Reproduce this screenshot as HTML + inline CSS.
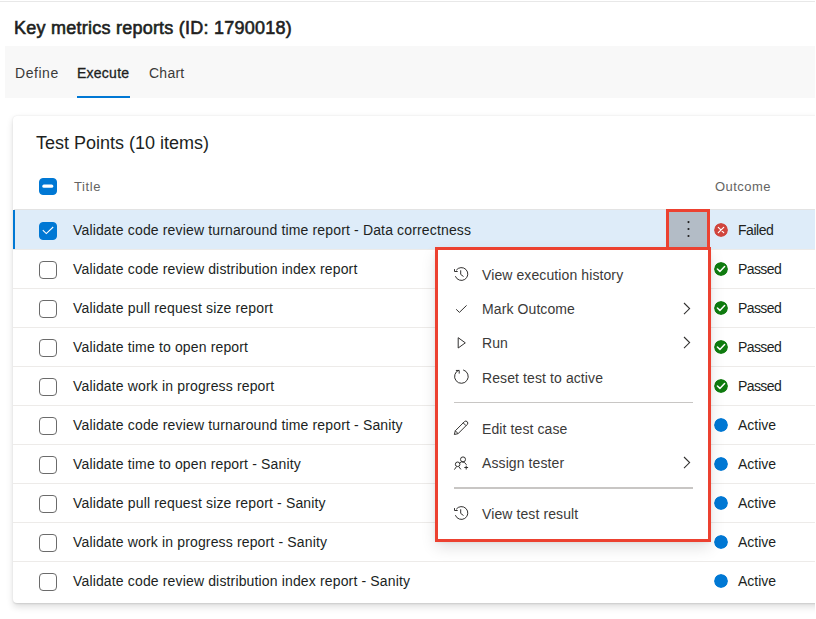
<!DOCTYPE html>
<html><head><meta charset="utf-8">
<style>
html,body{margin:0;padding:0;}
body{width:816px;height:619px;overflow:hidden;background:#fff;position:relative;font-family:"Liberation Sans",sans-serif;color:#323130;}
.abs{position:absolute;}
.topline{left:0;top:1px;width:816px;height:1px;background:#e8e8e8;}
.h1{left:14px;top:16px;font-size:18px;font-weight:400;letter-spacing:0.24px;-webkit-text-stroke:0.6px #201f1e;color:#201f1e;white-space:nowrap;line-height:24px;}
.band{left:5px;top:46px;width:810px;height:52px;background:#f8f8f8;}
.tab{top:63px;font-size:14px;line-height:20px;white-space:nowrap;color:#3b3a39;}
.ul{left:77px;top:96px;width:53px;height:2px;background:#0078d4;}
.card{left:13px;top:116px;width:830px;height:487px;background:#fff;border-radius:4px;box-shadow:0 3.2px 7.2px rgba(0,0,0,.13),0 0.6px 1.8px rgba(0,0,0,.11);overflow:hidden;}
.ctitle{left:23px;top:15px;font-size:18px;line-height:24px;white-space:nowrap;color:#201f1e;}
.hdr{top:63px;font-size:13px;font-weight:400;letter-spacing:.6px;color:#656463;line-height:16px;white-space:nowrap;}
.cb{width:16px;height:16px;border:1px solid #6b6b6b;border-radius:4px;left:26px;}
.cbf{background:#0078d4;border-color:#0078d4;border-radius:4px;}
.row{left:0;width:830px;height:38px;border-bottom:1px solid #edebe9;}
.sel{background:#deecf9;}
.rt{left:60px;top:10px;font-size:14px;line-height:18px;white-space:nowrap;letter-spacing:.15px;color:#201f1e;}
.oc{left:725px;top:10px;font-size:14px;line-height:18px;white-space:nowrap;color:#201f1e;}
.ic{left:701px;top:13px;width:14px;height:14px;border-radius:50%;}
.mi{left:482px;font-size:14px;line-height:18px;white-space:nowrap;color:#3b3a39;letter-spacing:.1px;}
</style></head><body>
<div class="abs topline"></div>
<div class="abs h1">Key metrics reports (ID: 1790018)</div>
<div class="abs band"></div>
<div class="abs tab" style="left:15px;letter-spacing:.55px">Define</div>
<div class="abs tab" style="left:77px;letter-spacing:.25px;-webkit-text-stroke:.3px #201f1e;color:#201f1e">Execute</div>
<div class="abs tab" style="left:149px;letter-spacing:.25px">Chart</div>
<div class="abs ul"></div>

<div class="abs card">
  <div class="abs ctitle">Test Points (10 items)</div>
  <div class="abs cb cbf" style="top:62px;height:15px;border-radius:4px"><svg class="abs" style="left:0;top:0" width="16" height="16"><rect x="2.3" y="5.4" width="11" height="3.4" rx="1.6" fill="#fff"/></svg></div>
  <div class="abs hdr" style="left:61px">Title</div>
  <div class="abs hdr" style="left:702px;letter-spacing:.45px">Outcome</div>
  <div class="abs" style="left:1px;top:93px;width:830px;height:1px;background:#e3e3e3"></div>
  <div class="abs row sel" style="top:94px;height:39px;"><div class="abs" style="left:0;top:0;width:2px;height:39px;background:#0078d4"></div><div class="abs cb cbf" style="top:12px"><svg class="abs" style="left:0;top:0" width="16" height="16" viewBox="0 0 16 16"><path d="M2.8 7.2L6.3 10.6L13.2 4" stroke="#fff" stroke-width="1.1" fill="none"/></svg></div><div class="abs rt" style="top:11px">Validate code review turnaround time report - Data correctness</div><svg class="abs ic" style="top:13px" viewBox="0 0 14 14"><circle cx="7" cy="7" r="7" fill="#d0453d"/><path d="M4.3 4.3L9.7 9.7M9.7 4.3L4.3 9.7" stroke="#fff" stroke-width="1.2" stroke-linecap="round"/></svg><div class="abs oc" style="top:11px;letter-spacing:-.45px">Failed</div></div>
  <div class="abs row" style="top:134px;height:38px;"><div class="abs cb" style="top:11px"></div><div class="abs rt" style="top:10px">Validate code review distribution index report</div><svg class="abs ic" style="top:12px" viewBox="0 0 14 14"><circle cx="7" cy="7" r="7" fill="#107c10"/><path d="M3.4 7L5.9 9.4L10.6 4.5" stroke="#fff" stroke-width="1.5" fill="none" stroke-linecap="round" stroke-linejoin="round"/></svg><div class="abs oc" style="top:10px;letter-spacing:-.6px">Passed</div></div>
  <div class="abs row" style="top:173px;height:38px;"><div class="abs cb" style="top:11px"></div><div class="abs rt" style="top:10px">Validate pull request size report</div><svg class="abs ic" style="top:12px" viewBox="0 0 14 14"><circle cx="7" cy="7" r="7" fill="#107c10"/><path d="M3.4 7L5.9 9.4L10.6 4.5" stroke="#fff" stroke-width="1.5" fill="none" stroke-linecap="round" stroke-linejoin="round"/></svg><div class="abs oc" style="top:10px;letter-spacing:-.6px">Passed</div></div>
  <div class="abs row" style="top:212px;height:38px;"><div class="abs cb" style="top:11px"></div><div class="abs rt" style="top:10px">Validate time to open report</div><svg class="abs ic" style="top:12px" viewBox="0 0 14 14"><circle cx="7" cy="7" r="7" fill="#107c10"/><path d="M3.4 7L5.9 9.4L10.6 4.5" stroke="#fff" stroke-width="1.5" fill="none" stroke-linecap="round" stroke-linejoin="round"/></svg><div class="abs oc" style="top:10px;letter-spacing:-.6px">Passed</div></div>
  <div class="abs row" style="top:251px;height:38px;"><div class="abs cb" style="top:11px"></div><div class="abs rt" style="top:10px">Validate work in progress report</div><svg class="abs ic" style="top:12px" viewBox="0 0 14 14"><circle cx="7" cy="7" r="7" fill="#107c10"/><path d="M3.4 7L5.9 9.4L10.6 4.5" stroke="#fff" stroke-width="1.5" fill="none" stroke-linecap="round" stroke-linejoin="round"/></svg><div class="abs oc" style="top:10px;letter-spacing:-.6px">Passed</div></div>
  <div class="abs row" style="top:290px;height:38px;"><div class="abs cb" style="top:11px"></div><div class="abs rt" style="top:10px">Validate code review turnaround time report - Sanity</div><svg class="abs ic" style="top:12px" viewBox="0 0 14 14"><circle cx="7" cy="7" r="7" fill="#0078d4"/></svg><div class="abs oc" style="top:10px">Active</div></div>
  <div class="abs row" style="top:329px;height:38px;"><div class="abs cb" style="top:11px"></div><div class="abs rt" style="top:10px">Validate time to open report - Sanity</div><svg class="abs ic" style="top:12px" viewBox="0 0 14 14"><circle cx="7" cy="7" r="7" fill="#0078d4"/></svg><div class="abs oc" style="top:10px">Active</div></div>
  <div class="abs row" style="top:368px;height:38px;"><div class="abs cb" style="top:11px"></div><div class="abs rt" style="top:10px">Validate pull request size report - Sanity</div><svg class="abs ic" style="top:12px" viewBox="0 0 14 14"><circle cx="7" cy="7" r="7" fill="#0078d4"/></svg><div class="abs oc" style="top:10px">Active</div></div>
  <div class="abs row" style="top:407px;height:38px;"><div class="abs cb" style="top:11px"></div><div class="abs rt" style="top:10px">Validate work in progress report - Sanity</div><svg class="abs ic" style="top:12px" viewBox="0 0 14 14"><circle cx="7" cy="7" r="7" fill="#0078d4"/></svg><div class="abs oc" style="top:10px">Active</div></div>
  <div class="abs row" style="top:446px;height:38px;border-bottom:none;"><div class="abs cb" style="top:11px"></div><div class="abs rt" style="top:10px">Validate code review distribution index report - Sanity</div><svg class="abs ic" style="top:12px" viewBox="0 0 14 14"><circle cx="7" cy="7" r="7" fill="#0078d4"/></svg><div class="abs oc" style="top:10px">Active</div></div>
</div>

<div class="abs" style="left:667px;top:210px;width:42px;height:39px;background:#b3bcc6"></div>
<svg class="abs" style="left:667px;top:210px" width="42" height="39"><circle cx="21.5" cy="12.1" r="1.05" fill="#201f1e"/><circle cx="21.5" cy="19" r="1.05" fill="#201f1e"/><circle cx="21.5" cy="26" r="1.05" fill="#201f1e"/></svg>
<div class="abs menu" style="left:436px;top:249px;width:274px;height:292px;background:#fff;box-shadow:0 6.4px 14.4px rgba(0,0,0,.13),0 1.2px 3.6px rgba(0,0,0,.11);"></div>
<div class="abs mi" style="top:266px">View execution history</div>
<div class="abs mi" style="top:300px">Mark Outcome</div>
<div class="abs mi" style="top:334px">Run</div>
<div class="abs mi" style="top:369px">Reset test to active</div>
<div class="abs" style="left:454px;top:402px;width:239px;height:1px;background:#c8c6c4"></div>
<div class="abs mi" style="top:420px">Edit test case</div>
<div class="abs mi" style="top:454px">Assign tester</div>
<div class="abs" style="left:454px;top:487px;width:239px;height:2px;background:#c8c6c4"></div>
<div class="abs mi" style="top:505px">View test result</div>

<svg class="abs" style="left:452px;top:264px" width="20" height="20" fill="none" stroke="#323130" stroke-width="1"><path d="M4.16 6.33A6.4 6.4 0 1 1 3.39 12.19"/><path d="M2.5 5.1V7.5H5.7"/><path d="M8.7 6.3V10.4L11.5 12.5"/></svg>
<svg class="abs" style="left:452px;top:298px" width="20" height="20" fill="none" stroke="#323130" stroke-width="1"><path d="M4.2 11.3L7.4 14.4L14.6 7.4"/></svg>
<svg class="abs" style="left:452px;top:332px" width="20" height="20" fill="none" stroke="#323130" stroke-width="1" stroke-linejoin="round"><path d="M6.2 5.7V16L13.3 10.85Z"/></svg>
<svg class="abs" style="left:452px;top:366px" width="20" height="20" fill="none" stroke="#323130" stroke-width="1"><path d="M11.16 3.93A6.8 6.8 0 1 1 7.07 4.11"/><path d="M3.9 4.45H7.2V7.6"/></svg>
<svg class="abs" style="left:452px;top:418px" width="20" height="20" fill="none" stroke="#323130" stroke-width="1" stroke-linejoin="round"><path d="M2.37 16.53L3.29 12.79L12.49 3.59A2 2 0 0 1 15.31 6.41L6.11 15.61Z"/><path d="M3.29 12.79L6.11 15.61M11.22 4.86L14.04 7.68"/></svg>
<svg class="abs" style="left:452px;top:452px" width="20" height="20" fill="none" stroke="#323130" stroke-width="1"><circle cx="5.65" cy="12.3" r="2.3"/><path d="M2.4 17.6L4.5 14.6M6.8 14.7L8.9 17.4"/><circle cx="11" cy="7.4" r="2.5"/><path d="M7.3 11.8L9.3 9.8Q12.9 9.3 14.5 12.8"/><path d="M14.2 13.7V17.5M12.3 15.5H16.1"/></svg>
<svg class="abs" style="left:452px;top:503px" width="20" height="20" fill="none" stroke="#323130" stroke-width="1"><path d="M4.16 6.33A6.4 6.4 0 1 1 3.39 12.19"/><path d="M2.5 5.1V7.5H5.7"/><path d="M8.7 6.3V10.4L11.5 12.5"/></svg>
<svg class="abs" style="left:680px;top:300px" width="14" height="18" fill="none" stroke="#323130" stroke-width="1.1"><path d="M4.0 3.0L9.6 8.6L4.0 14.2"/></svg>
<svg class="abs" style="left:680px;top:334px" width="14" height="18" fill="none" stroke="#323130" stroke-width="1.1"><path d="M4.0 3.0L9.6 8.6L4.0 14.2"/></svg>
<svg class="abs" style="left:680px;top:454px" width="14" height="18" fill="none" stroke="#323130" stroke-width="1.1"><path d="M4.0 3.0L9.6 8.6L4.0 14.2"/></svg>
<div class="abs" style="left:666px;top:209px;width:38px;height:35px;border:3px solid #ec4130"></div>
<div class="abs" style="left:435px;top:247px;width:270px;height:289px;border:3px solid #ec4130"></div>
<div class="abs" style="left:815px;top:0;width:1px;height:619px;background:#fff"></div>
</body></html>
